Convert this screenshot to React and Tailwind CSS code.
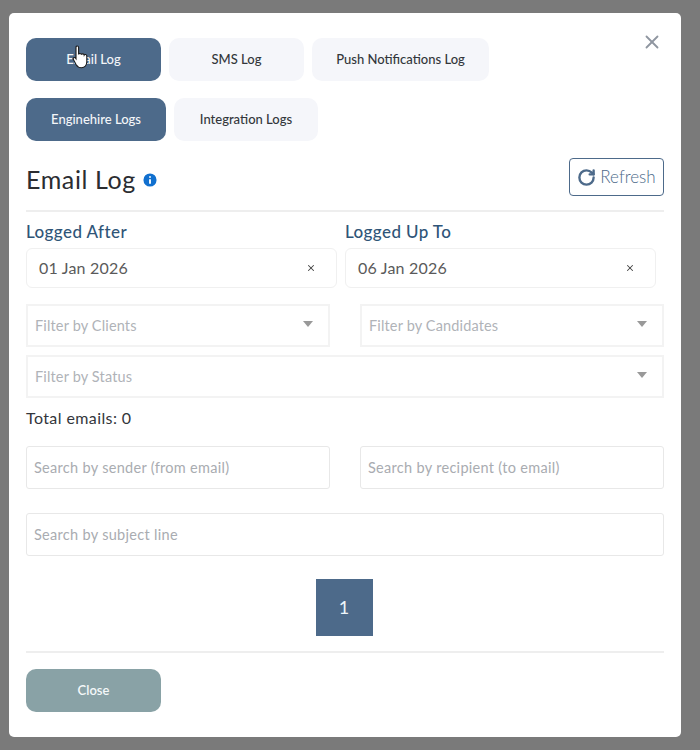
import { X, RotateCw, Info } from 'lucide-react';

const font = "font-['Lato','Noto_Sans',sans-serif]";

function TabButton({ label, active, width }) {
  return (
    <button
      className={`h-[43px] ${width} rounded-[10px] pt-px text-[13px] font-medium ${active ? 'bg-[#4d6a8a] text-[#f4f6f9]' : 'bg-[#f5f6fa] text-[#33363b]'}`}
    >
      {label}
    </button>
  );
}

function DateField({ value }) {
  return (
    <div className="flex h-10 w-[311px] items-center justify-between rounded-md border border-[#f0f0f0] pl-3 pr-5 text-base tracking-[0.2px] text-[#5a5a5a]">
      <span>{value}</span>
      <X size={10} strokeWidth={2.5} className="text-[#444444]" />
    </div>
  );
}

function SelectField({ placeholder, className }) {
  return (
    <div className={`flex h-[43px] items-center justify-between border-2 border-[#f3f3f3] pl-[7px] pr-[15px] text-[14.5px] tracking-[0.15px] text-[#b0b3b8] ${className}`}>
      <span>{placeholder}</span>
      <span className="-mt-1 h-0 w-0 border-x-[5px] border-t-[6px] border-x-transparent border-t-[#999999]" />
    </div>
  );
}

function SearchField({ placeholder, className }) {
  return (
    <div className={`flex h-[43px] items-center rounded-[3px] border border-[#e8e8e8] pl-[7px] text-[14.5px] tracking-[0.3px] text-[#a9acb1] ${className}`}>
      {placeholder}
    </div>
  );
}

export default function App() {
  return (
    <div className={`relative h-[750px] w-[700px] overflow-hidden bg-[#7a7a7a] pl-[9px] pt-[13px] ${font}`}>
      <div className="relative flex h-[724px] w-[672px] flex-col rounded-[5px] bg-white px-[17px] pt-[25px]">
        <button className="absolute right-[18px] top-[18px] text-[#8f96a0]">
          <X size={22} strokeWidth={2} />
        </button>

        <div className="flex gap-2">
          <TabButton label="Email Log" active width="w-[135px]" />
          <TabButton label="SMS Log" width="w-[135px]" />
          <TabButton label="Push Notifications Log" width="w-[177px]" />
        </div>
        <div className="mt-[17px] flex gap-2">
          <TabButton label="Enginehire Logs" active width="w-[140px]" />
          <TabButton label="Integration Logs" width="w-[144px]" />
        </div>

        <div className="mt-[17px] flex items-start justify-between border-b-2 border-[#eeeeee] pb-[14px]">
          <div className="mt-[5px] flex items-center gap-[5px]">
            <h2 className="text-[25px] font-normal leading-8 tracking-[0.6px] text-[#2b2d31]">Email Log</h2>
            <Info size={18} strokeWidth={2.5} className="mt-px fill-[#1170cf] text-white" />
          </div>
          <button className="flex h-[38px] w-[95px] items-center justify-center gap-1 rounded-[4px] border border-[#4d6a8a] text-[17px] font-light text-[#4d6a8a]">
            <RotateCw size={19} strokeWidth={3} className="text-[#4d6a8a]" />
            Refresh
          </button>
        </div>

        <div className="mt-[9px] flex gap-2">
          <div>
            <div className="mb-[5px] text-[17px] font-medium leading-[22px] tracking-[0.4px] text-[#2f5578]">Logged After</div>
            <DateField value="01 Jan 2026" />
          </div>
          <div>
            <div className="mb-[5px] text-[17px] font-medium leading-[22px] tracking-[0.4px] text-[#2f5578]">Logged Up To</div>
            <DateField value="06 Jan 2026" />
          </div>
        </div>

        <div className="mt-4 flex justify-between">
          <SelectField placeholder="Filter by Clients" className="w-[304px]" />
          <SelectField placeholder="Filter by Candidates" className="w-[304px]" />
        </div>
        <SelectField placeholder="Filter by Status" className="mt-2 w-full" />

        <div className="mt-[10px] h-5 text-[16px] leading-5 tracking-[0.4px] text-[#33363b]">Total emails: 0</div>

        <div className="mt-[18px] flex justify-between">
          <SearchField placeholder="Search by sender (from email)" className="w-[304px]" />
          <SearchField placeholder="Search by recipient (to email)" className="w-[304px]" />
        </div>
        <SearchField placeholder="Search by subject line" className="mt-6 w-full" />

        <div className="mt-[23px] flex justify-center">
          <div className="flex h-[57px] w-[57px] -translate-x-px items-center justify-center bg-[#4d6a8a] text-[18px] text-[#eef6fa]">1</div>
        </div>

        <div className="mt-[15px] border-t-2 border-[#eeeeee] pt-4">
          <button className="h-[43px] w-[135px] rounded-[10px] bg-[#89a2a6] pt-px text-[13px] font-semibold text-[#f4f8f9]">Close</button>
        </div>
      </div>

      {/* mouse cursor caught in the capture */}
      <svg className="absolute left-[72px] top-[45px]" width="18" height="25" viewBox="0 0 18 25">
        <path
          d="M4 2.2c0-1.6 2.6-1.6 2.6 0v7.3c.3-1.4 2.6-1.4 2.8.2.4-1.3 2.6-1.1 2.8.4.5-1 2.5-.7 2.6.8v5.6c0 3.4-2 6.2-5.4 6.2-2.8 0-4-1-5.2-3L1.4 14.6c-.9-1.5 1-2.9 2.2-1.5L4 13.7z"
          fill="#fff"
          stroke="#1a1a1a"
          strokeWidth="1.1"
        />
      </svg>
    </div>
  );
}
